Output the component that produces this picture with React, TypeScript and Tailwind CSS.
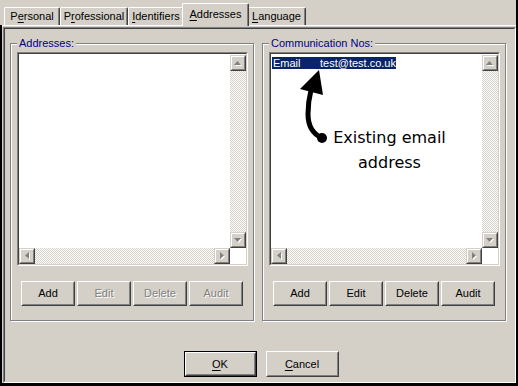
import React from 'react';

type Dir = 'up' | 'down' | 'left' | 'right';

// little grey triangles used on the disabled scroll arrows
const Arrow = ({ dir }: { dir: Dir }) => {
  const vertical = dir === 'up' || dir === 'down';
  const w = vertical ? 8 : 5;
  const h = vertical ? 5 : 8;
  const pts =
    dir === 'up'
      ? '3.5,0 7,4 0,4'
      : dir === 'down'
        ? '0,0 7,0 3.5,4'
        : dir === 'left'
          ? '4,0 4,7 0,3.5'
          : '0,0 4,3.5 0,7';
  return (
    <svg width={w} height={h} viewBox={`0 0 ${w} ${h}`}>
      <polygon points={pts} transform="translate(1 1)" fill="#ffffff" />
      <polygon points={pts} fill="#808080" />
    </svg>
  );
};

const ArrowBtn = ({ dir }: { dir: Dir }) => (
  <div className="h-[16px] w-[16px] shrink-0 border border-t-[#d4d0c8] border-l-[#d4d0c8] border-r-[#404040] border-b-[#404040] bg-[#d4d0c8]">
    <div className="flex h-full w-full items-center justify-center border border-t-white border-l-white border-r-[#808080] border-b-[#808080]">
      <Arrow dir={dir} />
    </div>
  </div>
);

const Track = () => (
  <div className="min-h-0 min-w-0 flex-1 bg-[image:repeating-conic-gradient(#d4d0c8_0%_25%,#ffffff_0%_50%)] bg-size-[2px_2px]" />
);

const ListBox = ({ children }: { children?: React.ReactNode }) => (
  <div className="ml-[6px] mt-[2px] h-[214px] w-[231px] border border-t-[#808080] border-l-[#808080] border-r-white border-b-white">
    <div className="flex h-full flex-col border border-t-[#404040] border-l-[#404040] border-r-[#d4d0c8] border-b-[#d4d0c8] bg-white">
      <div className="flex min-h-0 flex-1">
        <div className="min-w-0 flex-1 overflow-hidden pt-[3px]">{children}</div>
        <div className="flex w-[16px] flex-col pt-[1px]">
          <ArrowBtn dir="up" />
          <Track />
          <ArrowBtn dir="down" />
        </div>
      </div>
      <div className="flex h-[16px]">
        <ArrowBtn dir="left" />
        <Track />
        <ArrowBtn dir="right" />
        <div className="w-[16px] bg-white" />
      </div>
    </div>
  </div>
);

const Btn = ({ label, disabled }: { label: string; disabled?: boolean }) => (
  <div className="h-[25px] w-[54px] border border-t-white border-l-white border-r-[#404040] border-b-[#404040]">
    <div
      className={`flex h-full w-full items-center justify-center border border-t-[#d4d0c8] border-l-[#d4d0c8] border-r-[#808080] border-b-[#808080] ${
        disabled ? 'text-[#808080] [text-shadow:1px_1px_0_#ffffff]' : 'text-black'
      }`}
    >
      {label}
    </div>
  </div>
);

const Group = ({ label, children }: { label: string; children?: React.ReactNode }) => (
  <div className="flex h-[278px] w-[244px] flex-col border border-[#808080] shadow-[inset_1px_1px_0_#ffffff,1px_1px_0_#ffffff]">
    <span className="-mt-[7px] ml-[6px] h-[13px] self-start bg-[#d4d0c8] px-[2px] leading-[13px] text-[#000080]">
      {label}
    </span>
    {children}
  </div>
);

const ButtonRow = ({ enabled }: { enabled: boolean }) => (
  <div className="ml-[10px] mt-[15px] flex gap-[2px]">
    <Btn label="Add" />
    <Btn label="Edit" disabled={!enabled} />
    <Btn label="Delete" disabled={!enabled} />
    <Btn label="Audit" disabled={!enabled} />
  </div>
);

const tabs = [
  { pre: 'P', u: 'e', post: 'rsonal', w: 'w-[56px]' },
  { pre: 'P', u: 'r', post: 'ofessional', w: 'w-[68px]' },
  { pre: '', u: 'I', post: 'dentifiers', w: 'w-[56px]' },
  { pre: '', u: 'A', post: 'ddresses', w: 'w-[67px]', active: true },
  { pre: '', u: 'L', post: 'anguage', w: 'w-[59px]' },
];

export default function App() {
  return (
    <div className="relative h-[386px] w-[518px] overflow-hidden bg-[#d4d0c8] font-['Liberation_Sans',Arial,sans-serif] text-[11px] leading-[13px] text-black">
      <div className="flex h-full flex-col border-b-[3px] border-r-2 border-black">
        {/* Tabs */}
        <div className="flex h-[25px] shrink-0 items-end pl-[4px]">
          {tabs.map((t) =>
            t.active ? (
              <div
                key={t.u}
                className={`relative z-10 -mx-[2px] -mb-px h-[23px] ${t.w} rounded-t-[2px] border-l border-r border-t border-l-white border-t-white border-r-[#404040] bg-[#d4d0c8] pt-[4px] text-center shadow-[inset_-1px_0_0_#808080]`}
              >
                {t.pre}
                <span className="underline decoration-1 underline-offset-[2px]">{t.u}</span>
                {t.post}
              </div>
            ) : (
              <div
                key={t.u}
                className={`h-[18px] ${t.w} rounded-t-[2px] border-l border-r border-t border-l-white border-t-white border-r-[#404040] pt-[2px] text-center shadow-[inset_-1px_0_0_#808080]`}
              >
                {t.pre}
                <span className="underline decoration-1 underline-offset-[2px]">{t.u}</span>
                {t.post}
              </div>
            ),
          )}
        </div>

        {/* Tab page */}
        <div className="flex min-h-0 flex-1 flex-col border-l-2 border-black">
          <div className="flex min-h-0 flex-1 flex-col border-t border-t-white pl-px pt-px">
            <div className="flex min-h-0 flex-1 flex-col border border-t-[#808080] border-l-[#808080] border-r-white border-b-white">
              <div className="flex min-h-0 flex-1 flex-col border border-t-[#404040] border-l-[#404040] border-r-[#d4d0c8] border-b-[#d4d0c8]">
                <div className="ml-[5px] mt-[14px] flex gap-[8px]">
                  <Group label="Addresses:">
                    <ListBox />
                    <ButtonRow enabled={false} />
                  </Group>
                  <Group label="Communication Nos:">
                    <ListBox>
                      <div className="ml-px flex h-[12px] w-[124px] items-center bg-[#0a246a] leading-[12px] text-white">
                        <span className="w-[49px] pl-px">Email</span>
                        <span>test@test.co.uk</span>
                      </div>
                    </ListBox>
                    <ButtonRow enabled={true} />
                  </Group>
                </div>

                <div className="ml-[3px] mt-[30px] flex justify-center gap-[9px]">
                  <div className="h-[26px] w-[73px] border border-black">
                    <div className="h-full w-full border border-t-white border-l-white border-r-[#404040] border-b-[#404040]">
                      <div className="flex h-full w-full items-center justify-center border border-t-[#d4d0c8] border-l-[#d4d0c8] border-r-[#808080] border-b-[#808080]">
                        <span className="underline decoration-1 underline-offset-[2px]">O</span>K
                      </div>
                    </div>
                  </div>
                  <div className="h-[26px] w-[73px] border border-t-white border-l-white border-r-[#404040] border-b-[#404040]">
                    <div className="flex h-full w-full items-center justify-center border border-t-[#d4d0c8] border-l-[#d4d0c8] border-r-[#808080] border-b-[#808080]">
                      <span className="underline decoration-1 underline-offset-[2px]">C</span>ancel
                    </div>
                  </div>
                </div>
              </div>
            </div>
          </div>
        </div>
      </div>

      {/* Hand-drawn annotation over the list */}
      <div className="pointer-events-none absolute inset-0">
        <svg className="absolute inset-0" width={518} height={386}>
          <path
            d="M322 138 C 313 134, 308 126, 308 114 C 308 104, 309 98, 311 90"
            fill="none"
            stroke="#000000"
            strokeWidth={5}
            strokeLinecap="round"
          />
          <polygon points="319,70 300,89 323,95" fill="#000000" />
          <circle cx={322} cy={138} r={5} fill="#000000" />
        </svg>
        <div className="absolute left-[333px] top-[125px] w-[113px] text-center font-['DejaVu_Sans',sans-serif] text-[16px] leading-[25px] text-black">
          Existing email
          <br />
          address
        </div>
      </div>
    </div>
  );
}
